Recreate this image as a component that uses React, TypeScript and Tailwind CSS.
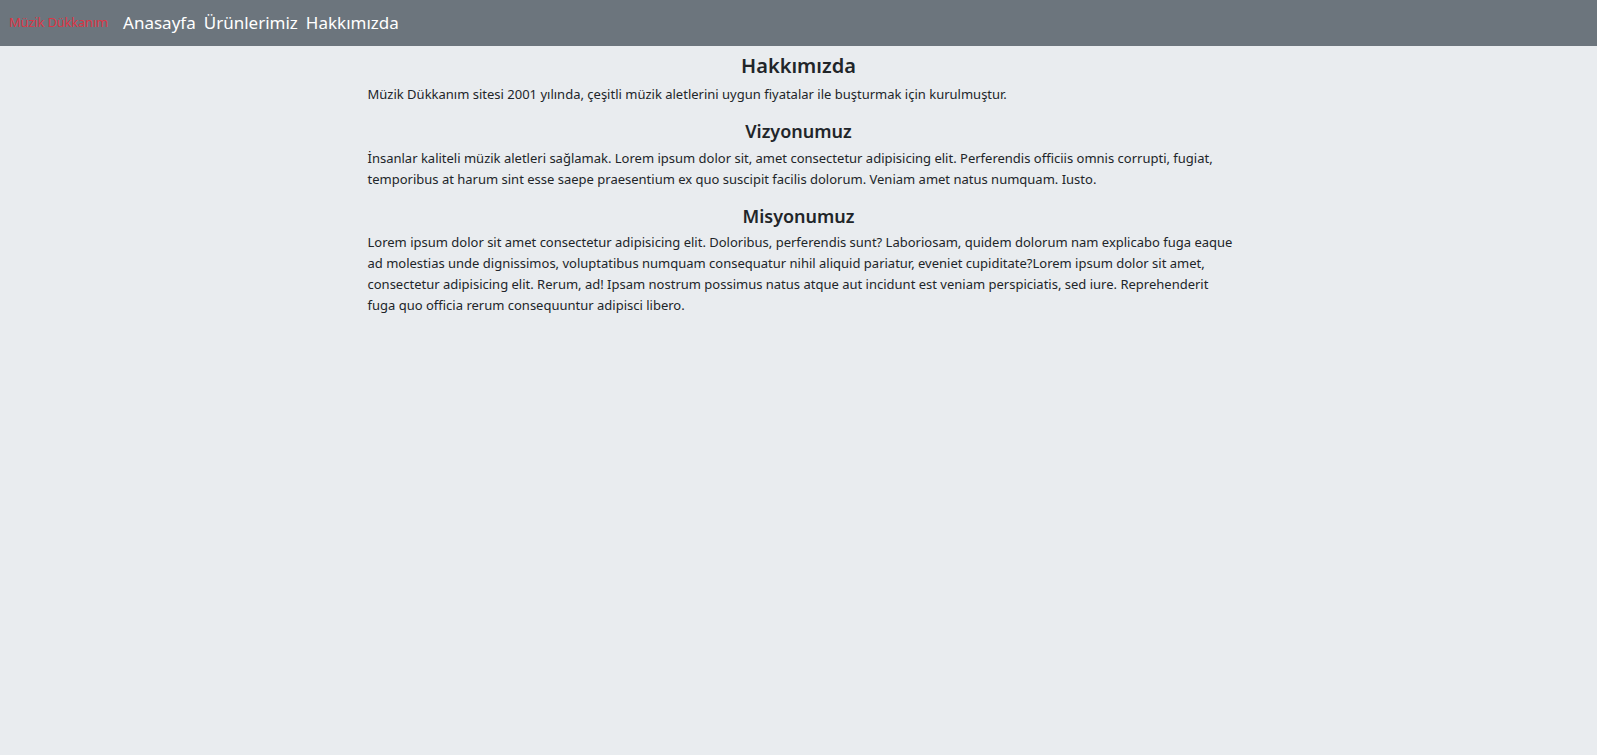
export default function App() {
  const font = { fontFamily: '"Noto Sans", "Open Sans", sans-serif' };
  return (
    <div className="min-h-[755px] bg-[#e9ecef] text-[#212529]" style={font}>
      <nav className="flex h-[46px] items-center bg-[#6c757d] pl-[9px]">
        <a className="text-[13px] text-[#dc3545] tracking-[-0.2px]">Müzik Dükkanım</a>
        <div className="ml-[15px] flex gap-[8px] text-[17px] text-white">
          <a>Anasayfa</a>
          <a>Ürünlerimiz</a>
          <a>Hakkımızda</a>
        </div>
      </nav>
      <main className="mx-auto w-[862px] whitespace-nowrap pt-[8px] text-[13px] leading-[21px]">
        <h2 className="mb-[6px] text-center text-[20px] leading-[24px] font-semibold">Hakkımızda</h2>
        <p className="mb-[14px]">
          Müzik Dükkanım sitesi 2001 yılında, çeşitli müzik aletlerini uygun fiyatalar ile buşturmak için kurulmuştur.
        </p>
        <h3 className="mb-[5px] text-center text-[18px] leading-[24px] font-semibold">Vizyonumuz</h3>
        <p className="mb-[14px]">
          İnsanlar kaliteli müzik aletleri sağlamak. Lorem ipsum dolor sit, amet consectetur adipisicing elit. Perferendis officiis omnis corrupti, fugiat,
          <br />
          temporibus at harum sint esse saepe praesentium ex quo suscipit facilis dolorum. Veniam amet natus numquam. Iusto.
        </p>
        <h3 className="mb-[4px] text-center text-[18px] leading-[24px] font-semibold">Misyonumuz</h3>
        <p>
          Lorem ipsum dolor sit amet consectetur adipisicing elit. Doloribus, perferendis sunt? Laboriosam, quidem dolorum nam explicabo fuga eaque
          <br />
          ad molestias unde dignissimos, voluptatibus numquam consequatur nihil aliquid pariatur, eveniet cupiditate?Lorem ipsum dolor sit amet,
          <br />
          consectetur adipisicing elit. Rerum, ad! Ipsam nostrum possimus natus atque aut incidunt est veniam perspiciatis, sed iure. Reprehenderit
          <br />
          fuga quo officia rerum consequuntur adipisci libero.
        </p>
      </main>
    </div>
  );
}
